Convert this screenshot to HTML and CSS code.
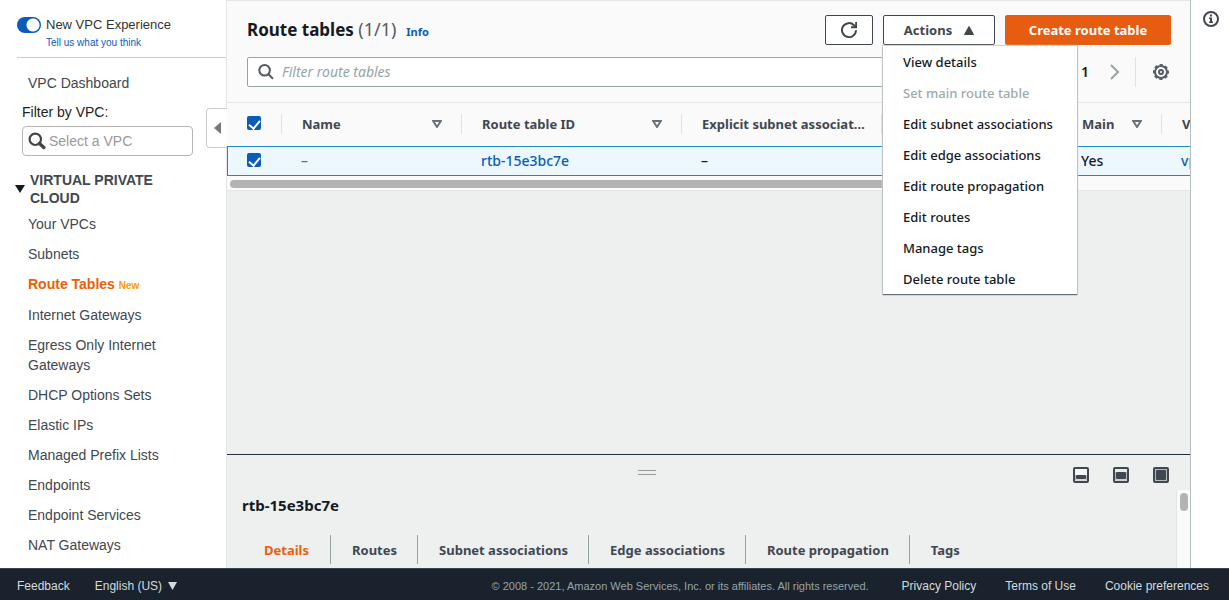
FILE: index.html
```html
<!DOCTYPE html>
<html lang="en">
<head>
<meta charset="utf-8">
<title>Route tables | VPC Console</title>
<link rel="stylesheet" href="styles.css">
</head>
<body>
<div class="workspace">
  <nav class="sidebar">
    <div class="experience">
      <label class="switch-row"><input type="checkbox" class="switch" checked>New VPC Experience</label>
      <a href="#" class="feedback-link">Tell us what you think</a>
    </div>
    <a href="#" class="nav-link dashboard">VPC Dashboard</a>
    <label class="filter-label" for="vpc-filter">Filter by VPC:</label>
    <div class="vpc-filter">
      <svg class="vpc-icon" viewBox="0 0 18 18" width="18" height="18"><circle cx="7.3" cy="7.3" r="5.7" fill="none" stroke="#444" stroke-width="2.2"/><path d="M11.5 11.5l4.3 4" stroke="#444" stroke-width="3.4" stroke-linecap="round"/></svg>
      <input id="vpc-filter" type="text" placeholder="Select a VPC">
    </div>
    <button class="group-title"><svg viewBox="0 0 10 8" width="10" height="8"><path d="M0 0h10L5 8z" fill="#16191f"/></svg><span>VIRTUAL PRIVATE CLOUD</span></button>
    <ul class="nav-list">
      <li><a href="#" class="nav-link">Your VPCs</a></li>
      <li><a href="#" class="nav-link">Subnets</a></li>
      <li><a href="#" class="nav-link current">Route Tables <small>New</small></a></li>
      <li><a href="#" class="nav-link">Internet Gateways</a></li>
      <li><a href="#" class="nav-link">Egress Only Internet Gateways</a></li>
      <li><a href="#" class="nav-link">DHCP Options Sets</a></li>
      <li><a href="#" class="nav-link">Elastic IPs</a></li>
      <li><a href="#" class="nav-link">Managed Prefix Lists</a></li>
      <li><a href="#" class="nav-link">Endpoints</a></li>
      <li><a href="#" class="nav-link">Endpoint Services</a></li>
      <li><a href="#" class="nav-link">NAT Gateways</a></li>
    </ul>
    <button class="collapse" aria-label="Collapse navigation"><svg viewBox="0 0 7 12" width="7" height="12"><path d="M7 0v12L0 6z" fill="#777"/></svg></button>
  </nav>

  <main class="content">
    <section class="resources">
      <header class="toolbar">
        <h1>Route tables <span class="count">(1/1)</span></h1>
        <a href="#" class="info-link">Info</a>
        <div class="actions">
          <button class="btn refresh" aria-label="Refresh"><svg viewBox="0 0 16 16" width="16" height="16" fill="none" stroke="#414750" stroke-width="2"><path d="M15 8.2A7 7 0 1 1 13 3.2L15 5"/><path d="M15.2 0v5.2H10"/></svg></button>
          <div class="menu-anchor">
            <button class="btn menu-button" aria-expanded="true">Actions <svg viewBox="0 0 10 9" width="10" height="9"><path d="M5 .5L9.5 8.5h-9z" fill="#414750" stroke="#414750" stroke-linejoin="round"/></svg></button>
            <div class="menu" role="menu">
              <button role="menuitem">View details</button>
              <button role="menuitem" disabled>Set main route table</button>
              <button role="menuitem">Edit subnet associations</button>
              <button role="menuitem">Edit edge associations</button>
              <button role="menuitem">Edit route propagation</button>
              <button role="menuitem">Edit routes</button>
              <button role="menuitem">Manage tags</button>
              <button role="menuitem">Delete route table</button>
            </div>
          </div>
          <button class="btn primary">Create route table</button>
        </div>
      </header>
      <div class="filter-row">
        <div class="search">
          <svg viewBox="0 0 16 16" width="16" height="16" fill="none" stroke="#545b64" stroke-width="2"><circle cx="6.6" cy="6.3" r="5.3"/><path d="M10.4 10.2l4.6 4.6"/></svg>
          <input type="text" placeholder="Filter route tables" aria-label="Filter route tables">
        </div>
        <div class="pager">
          <button aria-label="Previous page"><svg viewBox="0 0 10 16" width="10" height="16" fill="none" stroke="#aab7b8" stroke-width="2"><path d="M9 1L2 8l7 7"/></svg></button>
          <span class="page">1</span>
          <button aria-label="Next page"><svg viewBox="0 0 10 16" width="10" height="16" fill="none" stroke="#95a5a6" stroke-width="2"><path d="M1 1l7 7-7 7"/></svg></button>
        </div>
        <button class="settings" aria-label="Preferences"><svg viewBox="0 0 16 16" width="16" height="16" fill="none" stroke="#545b64"><circle cx="8" cy="8" r="6" stroke-width="2"/><circle cx="8" cy="8" r="7.2" stroke-width="1.6" stroke-dasharray="3.2 2.455" stroke-dashoffset="1.6"/><circle cx="8" cy="8" r="2" stroke-width="2"/></svg></button>
      </div>
      <div class="table-wrap">
        <table>
          <colgroup><col class="c-check"><col class="c-name"><col class="c-id"><col class="c-subnet"><col class="c-edge"><col class="c-main"><col class="c-vpc"></colgroup>
          <thead>
            <tr>
              <th><input type="checkbox" class="tick" aria-label="Select all" checked></th>
              <th><div class="head"><span>Name</span><svg class="sort" viewBox="0 0 10 8" width="10" height="8"><path d="M1.2 1h7.6L5 7z" fill="none" stroke="#687078" stroke-width="1.9"/></svg></div></th>
              <th><div class="head"><span>Route table ID</span><svg class="sort" viewBox="0 0 10 8" width="10" height="8"><path d="M1.2 1h7.6L5 7z" fill="none" stroke="#687078" stroke-width="1.9"/></svg></div></th>
              <th><div class="head wide"><span>Explicit subnet associations</span></div></th>
              <th><div class="head"><span>Edge associations</span></div></th>
              <th><div class="head"><span>Main</span><svg class="sort" viewBox="0 0 10 8" width="10" height="8"><path d="M1.2 1h7.6L5 7z" fill="none" stroke="#687078" stroke-width="1.9"/></svg></div></th>
              <th><div class="head"><span>VPC</span></div></th>
            </tr>
          </thead>
          <tbody>
            <tr>
              <td><input type="checkbox" class="tick" aria-label="Select rtb-15e3bc7e" checked></td>
              <td class="muted">–</td>
              <td><a href="#">rtb-15e3bc7e</a></td>
              <td>–</td>
              <td>–</td>
              <td>Yes</td>
              <td><a href="#">vpc</a></td>
            </tr>
          </tbody>
        </table>
      </div>
      <div class="h-scroll"><div class="h-thumb"></div></div>
    </section>

    <section class="details">
      <div class="panel-bar">
        <div class="grip"></div>
        <div class="panel-sizes">
          <button aria-label="Small panel"><svg viewBox="0 0 16 16" width="16" height="16"><rect x="1" y="1" width="14" height="14" rx="1" fill="#f5f6f6" stroke="#414750" stroke-width="2"/><path d="M2.500 8v5h11V8" fill="none" stroke="#b5b8bb"/><rect x="3" y="8" width="10" height="4" rx="1" fill="#414750"/></svg></button>
          <button aria-label="Medium panel"><svg viewBox="0 0 16 16" width="16" height="16"><rect x="1" y="1" width="14" height="14" rx="1" fill="#e8eaeb" stroke="#414750" stroke-width="2"/><path d="M2.500 5v8h11V5" fill="none" stroke="#b5b8bb"/><rect x="3" y="5" width="10" height="7" rx="1" fill="#414750"/></svg></button>
          <button aria-label="Full panel"><svg viewBox="0 0 16 16" width="16" height="16"><rect x="1" y="1" width="14" height="14" rx="1" fill="#b5b8bb" stroke="#414750" stroke-width="2"/><rect x="3" y="3" width="10" height="10" rx="1" fill="#414750"/></svg></button>
        </div>
      </div>
      <div class="panel-body">
        <div class="panel-main">
          <h2>rtb-15e3bc7e</h2>
          <div class="tabs" role="tablist">
            <button role="tab" aria-selected="true">Details</button>
            <button role="tab">Routes</button>
            <button role="tab">Subnet associations</button>
            <button role="tab">Edge associations</button>
            <button role="tab">Route propagation</button>
            <button role="tab">Tags</button>
          </div>
        </div>
        <div class="v-scroll"><div class="v-thumb"></div></div>
      </div>
    </section>
  </main>

  <aside class="help-rail">
    <button aria-label="Open help"><svg viewBox="0 0 16 16" width="16" height="16"><circle cx="8" cy="8" r="7" fill="none" stroke="#414750" stroke-width="2"/><path d="M7 3.500h2v2H7zM6 6.500h3v4h1V12H6v-1.500h1V8H6z" fill="#414750"/></svg></button>
  </aside>
</div>

<footer class="footer">
  <a href="#">Feedback</a>
  <button class="language">English (US) <svg viewBox="0 0 9 8" width="9" height="8"><path d="M0 0h9L4.500 8z" fill="#d5dbdb"/></svg></button>
  <span class="copyright">© 2008 - 2021, Amazon Web Services, Inc. or its affiliates. All rights reserved.</span>
  <a href="#">Privacy Policy</a>
  <a href="#">Terms of Use</a>
  <a href="#">Cookie preferences</a>
</footer>
</body>
</html>
```
FILE: styles.css
```css
* { box-sizing: border-box; }

body {
  margin: 0;
  height: 100vh;
  display: flex;
  flex-direction: column;
  overflow: hidden;
  background: #fff;
  color: #16191f;
  font: 14px/20px "Noto Sans", "Open Sans", sans-serif;
}

a { color: #0a5cb8; text-decoration: none; }
button { margin: 0; padding: 0; border: 0; background: none; color: inherit; font: inherit; }
input { margin: 0; font: inherit; }
svg { display: block; flex: none; }
h1, h2 { margin: 0; }

.workspace { flex: 1; min-height: 0; display: flex; }

/* Sidebar */
.sidebar {
  position: relative;
  flex: none;
  width: 227px;
  border-right: 1px solid #e4e6e6;
  color: #414750;
  font: 14px/20px "Liberation Sans", Arial, sans-serif;
}
.experience {
  margin-left: 17px;
  padding: 16px 0 5px;
  border-bottom: 1px solid #ccc;
}
.switch-row { display: flex; align-items: center; gap: 5px; font-size: 13px; line-height: 18px; color: #333; }
.switch {
  appearance: none;
  width: 24px;
  height: 16px;
  border-radius: 8px;
  background: radial-gradient(circle at 16px 8px, #fff 6px, #0a5cb8 7px);
}
.feedback-link { display: block; margin-left: 29px; font-size: 10px; line-height: 18px; }
.nav-link { display: block; margin-left: 28px; color: #414750; }
.dashboard { margin-top: 15px; }
.filter-label { display: block; margin: 9px 0 4px 22px; color: #222; }
.vpc-filter {
  display: flex;
  align-items: center;
  gap: 3px;
  width: 171px;
  height: 30px;
  margin-left: 22px;
  padding: 0 5px;
  border: 1px solid #b5b5b5;
  border-radius: 4px;
}
.vpc-filter input { flex: 1; min-width: 0; padding: 0; border: 0; outline: 0; color: #333; }
.vpc-filter input::placeholder { color: #999; opacity: 1; }
.group-title {
  display: flex;
  align-items: center;
  gap: 5px;
  width: 180px;
  margin: 15px 0 0 15px;
  font-weight: bold;
  line-height: 18px;
  text-align: left;
}
.nav-list {
  display: flex;
  flex-direction: column;
  gap: 10px;
  width: 180px;
  margin: 7px 0 0;
  padding: 0;
  list-style: none;
}
.nav-link.current { padding-bottom: 1px; color: #eb5f07; font-weight: bold; }
.nav-link small { color: #ff9900; font-size: 10px; line-height: 10px; }
.collapse {
  position: absolute;
  top: 108px;
  right: -1px;
  display: flex;
  align-items: center;
  justify-content: center;
  width: 21px;
  height: 40px;
  border: 1px solid #ccc;
  border-right: 0;
  border-radius: 4px 0 0 4px;
  background: #fff;
}

/* Resource list */
.content {
  flex: 1;
  min-width: 0;
  display: flex;
  flex-direction: column;
  background: #eef0f0;
}
.resources { background: #fafafa; border-top: 1px solid #e4e7e7; border-bottom: 1px solid #e4e7e7; }
.toolbar { display: flex; align-items: center; gap: 10px; padding: 14px 19px 0 20px; }
h1 { font-size: 17px; line-height: 30px; }
.count { color: #545b64; font-size: 18px; font-weight: 400; line-height: 20px; }
.info-link { padding-top: 4px; font-size: 11px; font-weight: bold; }
.actions { display: flex; gap: 10px; margin-left: auto; }
.btn {
  display: flex;
  align-items: center;
  justify-content: center;
  gap: 12px;
  height: 30px;
  padding: 0 20px;
  border: 1px solid #414750;
  border-radius: 2px;
  background: #fff;
  color: #414750;
  font-size: 13px;
  font-weight: bold;
  white-space: nowrap;
}
.refresh { width: 48px; }
.menu-button { width: 112px; }
.primary { width: 166px; border-color: #e65c10; background: #e65c10; color: #fff; }
.menu-anchor { position: relative; }
.menu {
  position: absolute;
  z-index: 2;
  top: 31px;
  left: 0;
  display: flex;
  flex-direction: column;
  width: 194px;
  background: #fff;
  box-shadow: 0 1px 1px #687078, 0 0 1px 1px #cfd5d5;
}
.menu button {
  height: 31px;
  padding: 0 20px;
  font-size: 13px;
  font-weight: 500;
  text-align: left;
  white-space: nowrap;
}
.menu button:disabled { color: #9cabab; }

.filter-row { display: flex; align-items: center; padding: 12px 19px 15px 20px; }
.search {
  flex: 1;
  display: flex;
  align-items: center;
  gap: 8px;
  height: 30px;
  padding: 0 10px;
  border: 1px solid #95a5a6;
  border-radius: 2px;
  background: #fff;
}
.search input { flex: 1; min-width: 0; padding: 0; border: 0; outline: 0; background: none; }
.search input::placeholder { color: #95a5a6; font-style: italic; opacity: 1; }
.pager { display: flex; align-items: center; gap: 21px; margin-left: 30px; padding-right: 15px; }
.page { font-weight: 600; }
.settings { display: flex; align-items: center; height: 30px; padding: 0 2px 0 17px; border-left: 1px solid #e0e3e3; }

.table-wrap { overflow: hidden; border-top: 1px solid #e4e7e7; }
table { width: 1200px; table-layout: fixed; border-collapse: collapse; }
.c-check { width: 54px; }
.c-name, .c-edge { width: 180px; }
.c-id { width: 220px; }
.c-subnet { width: 200px; }
.c-main { width: 100px; }
th, td { padding: 0 19px; text-align: left; white-space: nowrap; }
th { height: 43px; padding: 0 0 1px; color: #414750; font-size: 13px; }
th:first-child { padding: 0 0 3px 20px; }
.head {
  display: flex;
  align-items: center;
  justify-content: space-between;
  height: 20px;
  padding: 0 19px 0 20px;
  border-left: 1px solid #e0e3e3;
}
.head.wide { padding-right: 14px; }
.head span { overflow: hidden; text-overflow: ellipsis; }
td:nth-child(n+2) { padding: 0 0 0 20px; font-weight: 500; }
td:first-child { padding: 0 0 2px 20px; }
tbody tr { height: 30px; outline: 1px solid #1e8bc0; outline-offset: -1px; background: #ecf8fe; }
.muted { color: #687078; }
.tick {
  appearance: none;
  display: flex;
  justify-content: center;
  width: 14px;
  height: 14px;
  border-radius: 2px;
  background: #0a5cb8;
}
.tick:checked::before {
  content: "";
  width: 5px;
  height: 9px;
  margin-top: 2px;
  border: solid #fff;
  border-width: 0 2px 2px 0;
  transform: rotate(40deg);
}
.h-scroll { padding: 4px 3px 2px; }
.h-thumb { width: 70%; height: 8px; border-radius: 4px; background: #b3b3b3; }

/* Details panel */
.details { display: flex; flex-direction: column; margin-top: auto; border-top: 1px solid #232f3e; }
.panel-bar { display: flex; align-items: center; padding: 12px 21px 7px; }
.grip { width: 18px; height: 5px; margin: -6px 0 0 390px; border: solid #999; border-width: 1px 0; }
.panel-sizes { display: flex; gap: 24px; margin-left: auto; }
.panel-body { display: flex; }
.panel-main { flex: 1; padding: 5px 0 4px 15px; }
h2 { font-size: 15px; line-height: 20px; }
.tabs { display: flex; margin-top: 20px; }
.tabs button { height: 29px; padding: 0 20px 0 21px; border-left: 1px solid #95a5a6; color: #414750; font-size: 13px; font-weight: bold; }
.tabs button:first-child { padding: 0 21px 0 22px; border-left: 0; }
.tabs button[aria-selected="true"] { color: #eb5f07; }
.v-scroll { width: 14px; padding: 3px; border-left: 1px solid #e4e6e6; background: #fafafa; }
.v-thumb { width: 8px; height: 18px; border-radius: 4px; background: #b3b3b3; }

.help-rail { flex: none; width: 39px; padding: 11px 12px; border-left: 1px solid #b5bfc0; }

/* Footer */
.footer {
  flex: none;
  display: flex;
  align-items: center;
  height: 32px;
  padding: 2px 20px 0 17px;
  border-top: 1px solid #3a434d;
  background: #1a222e;
  color: #d5dbdb;
  font: 12px/16px "Liberation Sans", Arial, sans-serif;
}
.footer a { color: inherit; margin-left: 29px; }
.footer a:first-child { margin-left: 0; }
.language { display: flex; align-items: center; gap: 6px; margin-left: 25px; }
.copyright { margin-left: auto; padding-right: 4px; color: #95a5a6; font-size: 11px; }
```
